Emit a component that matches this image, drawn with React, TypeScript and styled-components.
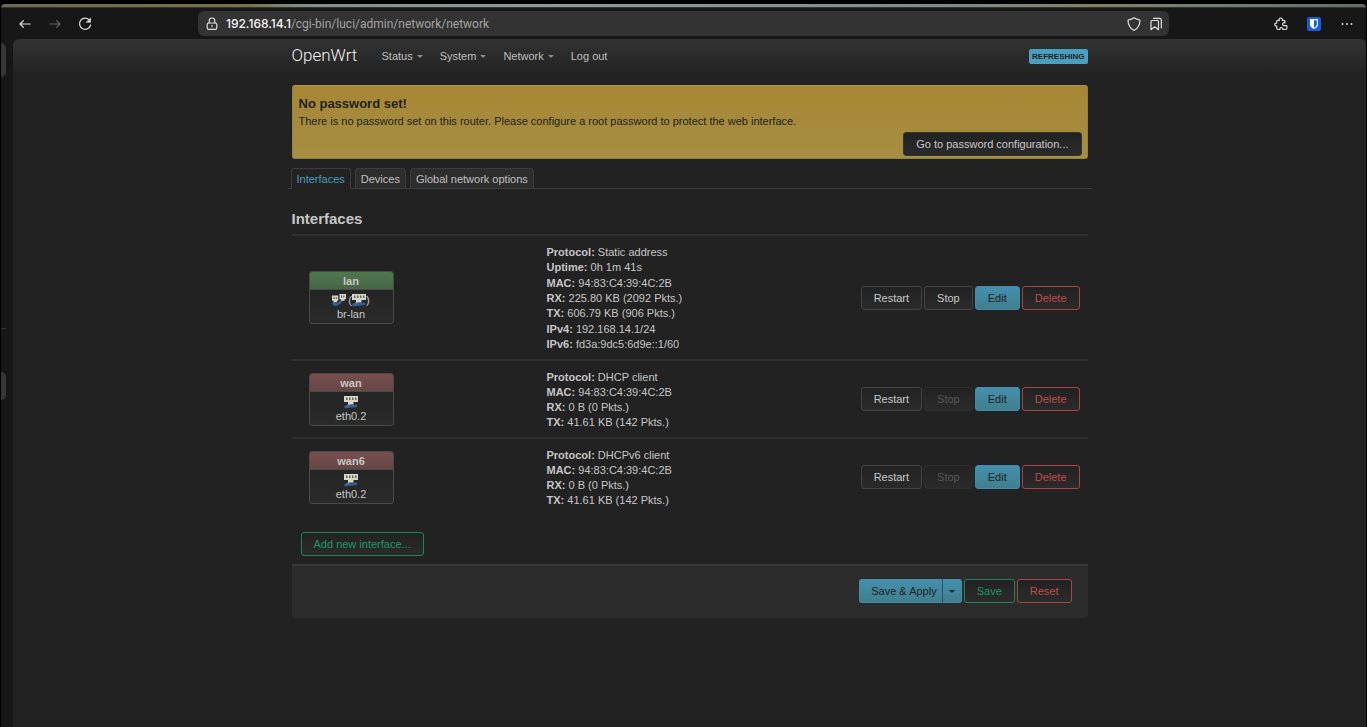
import React from "react";
import styled, { createGlobalStyle, css } from "styled-components";

const GlobalStyle = createGlobalStyle`
  * { box-sizing: border-box; }
  body {
    margin: 0;
    background: #000;
    color: #c6c6c6;
    font: 11px/15px "Helvetica Neue", "Liberation Sans", Arial, sans-serif;
  }
  button, input { font: inherit; }
  a { color: inherit; text-decoration: none; }
`;

/* ---------- browser window ---------- */

const Window = styled.div`
  display: flex;
  flex-direction: column;
  min-height: 100vh;
  padding: 4px 1px 0;
`;

const TopStrip = styled.div`
  height: 4px;
  border-radius: 4px 4px 0 0;
  border-bottom: 1px solid #333;
  background: linear-gradient(90deg, #6c6a50 0%, #7a7242 18%, #7f9088 22%, #8d9a9c 40%, #7c8c8c 70%, #82805c 80%, #6c7f74 90%, #5d6f63 100%);
`;

const Toolbar = styled.div`
  display: grid;
  grid-template-columns: 1fr 71% 1fr;
  align-items: center;
  height: 31px;
  background: #171717;
`;

const ToolGroup = styled.div<{ $end?: boolean }>`
  display: flex;
  align-items: center;
  gap: ${(p) => (p.$end ? 18 : 14)}px;
  padding: 0 11px 0 16px;
  justify-content: ${(p) => (p.$end ? "flex-end" : "flex-start")};
`;

const IconButton = styled.button<{ $dim?: boolean }>`
  display: flex;
  padding: 0;
  border: 0;
  background: none;
  color: ${(p) => (p.$dim ? "#646464" : "#dedede")};
`;

const AddressBar = styled.div`
  display: flex;
  align-items: center;
  gap: 6px;
  height: 25px;
  margin: 0 -1px;
  padding: 0 5px 0 6px;
  border-radius: 6px;
  background: #333;
`;

const Address = styled.label`
  display: flex;
  flex: 1;
  min-width: 0;
  align-items: center;
  font: 12px/16px Inter, sans-serif;
`;

const Host = styled.span`
  color: #f4f4f4;
  font-weight: 500;
`;

const PathInput = styled.input`
  flex: 1;
  min-width: 0;
  padding: 0;
  border: 0;
  outline: 0;
  background: none;
  color: #a2a2a2;
  font-family: Roboto, sans-serif;
`;

const Body = styled.div`
  display: flex;
  flex: 1;
  background: #171717;
`;

const SideRail = styled.div`
  position: relative;
  width: 12px;
`;

const RailPill = styled.span<{ $top: number; $height: number }>`
  position: absolute;
  left: 0;
  top: ${(p) => p.$top}px;
  width: 5px;
  height: ${(p) => p.$height}px;
  border-radius: 0 5px 5px 0;
  background: #363636;
`;

const Viewport = styled.div`
  flex: 1;
  min-width: 0;
  border-radius: 6px 6px 0 0;
  background: linear-gradient(#333 0, #222 35px) #222;
`;

/* ---------- router page ---------- */

const Container = styled.div`
  max-width: 796px;
  margin: 0 auto;
`;

const Header = styled.header`
  display: flex;
  align-items: center;
  height: 34px;
`;

const Brand = styled.a`
  width: 90px;
  padding-bottom: 3px;
  color: #f2f2f2;
  font: 300 17px/24px Roboto, sans-serif;
`;

const Nav = styled.nav`
  display: flex;
  flex: 1;
  gap: 17px;
  color: #bfbfbf;
`;

const NavLink = styled.a`
  display: flex;
  align-items: center;
  gap: 4px;
`;

const Caret = styled.span<{ $color?: string }>`
  border: 3px solid transparent;
  border-top-color: ${(p) => p.$color || "#8c8c8c"};
  border-bottom: 0;
`;

const Badge = styled.span`
  padding: 0 3px;
  border-radius: 2px;
  background: #4a9fbe;
  color: #222;
  font-size: 8px;
  font-weight: 700;
`;

const Alert = styled.section`
  display: flex;
  flex-direction: column;
  height: 74px;
  margin: 12px 0 9px;
  padding: 10px 5px 2px 6px;
  border: 1px solid #96803a;
  border-top-color: #b3924a;
  border-radius: 3px;
  background: linear-gradient(#a78634, #a58f43);
  color: #222;

  h4 { margin: 0 0 2px; font-size: 13px; line-height: 16px; }
  p { margin: 0; }
`;

const Tabs = styled.nav`
  display: flex;
  gap: 4px;
  margin: 0 -4px;
  padding: 0 3px;
  border-bottom: 1px solid #3c3c3c;
`;

const Tab = styled.a<{ $active?: boolean }>`
  height: 21px;
  margin-bottom: -1px;
  padding: 3px 5px;
  border: 1px solid #3c3c3c;
  border-bottom-color: ${(p) => (p.$active ? "#222" : "#3c3c3c")};
  border-radius: 3px 3px 0 0;
  background: ${(p) => (p.$active ? "#222" : "#2d2d2d")};
  color: ${(p) => (p.$active ? "#4a9fbe" : "#c0c0c0")};
`;

const Title = styled.h3`
  margin: 19px 0 0;
  padding-bottom: 4px;
  border-bottom: 2px solid #2f2f2f;
  font-size: 15px;
  line-height: 22px;
`;

const Table = styled.table`
  display: block;
  tbody { display: block; }
`;

const Row = styled.tr`
  display: grid;
  grid-template-columns: 255px 1fr auto;
  min-height: 78px;
  border-bottom: 2px solid #2f2f2f;
  &:first-child { min-height: 125px; }
  &:last-child { border-bottom-color: transparent; }
`;

const NameCell = styled.td`
  display: flex;
  align-items: center;
  padding: 0 17px;
`;

const IfaceBox = styled.div`
  width: 85px;
  height: 53px;
  overflow: hidden;
  border: 1px solid #4a4a4a;
  border-radius: 3px;
  background: linear-gradient(#222, #2a2a2a);
  text-align: center;
`;

const IfaceHead = styled.div<{ $up?: boolean }>`
  height: 18px;
  border-bottom: 1px solid #4a4a4a;
  background: ${(p) => (p.$up ? "linear-gradient(#4f784f, #466646)" : "linear-gradient(#784f4f, #664646)")};
  font-weight: 700;
  line-height: 18px;
`;

const IfaceIcons = styled.div`
  display: flex;
  justify-content: center;
  gap: 2px;
  height: 17px;
  padding-top: 4px;
  line-height: 12px;

  span { display: flex; }
`;

const DetailsCell = styled.td`
  display: flex;
  flex-direction: column;
  justify-content: space-between;
  padding: 9px 0 7px;
`;

const ActionsCell = styled.td`
  display: flex;
  align-items: center;
  gap: 2px;
  padding: 0 8px;
`;

type Tone = "neutral" | "primary" | "danger" | "success";
const tones = {
  neutral: css`
    border-color: #444;
    color: #c8c8c8;
  `,
  primary: css`
    border-color: #438ca8;
    background: linear-gradient(#4490ae, #407f8e);
    color: #222;
  `,
  danger: css`
    border-color: #a84644;
    color: #c04c4a;
  `,
  success: css`
    border-color: #1c8558;
    color: #1c9b64;
  `,
};

const Button = styled.button<{ $tone?: Tone }>`
  height: 24px;
  padding: 0 12px;
  border: 1px solid;
  border-radius: 3px;
  background: linear-gradient(#222, #2b2b2b);
  line-height: 20px;
  white-space: nowrap;
  ${(p) => tones[p.$tone || "neutral"]}
  &:disabled { border-color: #2d2d2d; color: #585858; }
`;

const AlertButton = styled(Button)`
  align-self: flex-end;
  margin-top: auto;
  border-color: #333;
`;

const AddRow = styled.div`
  display: flex;
  padding: 15px 9px 8px;
`;

const Footer = styled.footer`
  display: flex;
  justify-content: flex-end;
  gap: 2px;
  padding: 13px 16px 15px;
  border-top: 2px solid #383838;
  border-radius: 0 0 3px 3px;
  background: #2c2c2c;
`;

const SplitButton = styled.div`
  display: flex;

  ${Button}:first-child {
    padding-right: 5px;
    padding-left: 11px;
    border-right-color: #2c5563;
    border-radius: 3px 0 0 3px;
  }
  ${Button}:last-child {
    padding: 0 6px;
    border-left: 0;
    border-radius: 0 3px 3px 0;
  }
  ${Caret} { display: block; }
`;

/* ---------- icons ---------- */

const Icon = ({ children, size = 16 }: { children: React.ReactNode; size?: number }) => (
  <svg width={size} height={size} viewBox="0 0 16 16" fill="none" stroke="currentColor" strokeWidth="1.2" strokeLinecap="round" strokeLinejoin="round" aria-hidden="true">
    {children}
  </svg>
);

const BackIcon = () => <Icon><path d="M13.2 8H3M6.4 4.6 3 8l3.4 3.4" /></Icon>;
const ForwardIcon = () => <Icon><path d="M2.8 8H13M9.6 4.6 13 8l-3.4 3.4" /></Icon>;
const ReloadIcon = () => (
  <Icon>
    <path d="M12.6 4.3A5.6 5.6 0 1 0 13.6 9" />
    <path d="M13.6 2.2v4.1H9.5z" fill="currentColor" strokeWidth="0.6" />
  </Icon>
);
const LockIcon = () => (
  <Icon>
    <rect x="3.2" y="7" width="9.6" height="6.4" rx="1.6" />
    <path d="M5.200 7V4.800a2.800 2.800 0 0 1 5.600 0V7M8 9.600v1.200" />
  </Icon>
);
const ShieldIcon = () => (
  <Icon>
    <path d="M8 1.800c1.600 1.100 3.300 1.800 5.300 2 .5.1.8.4.7.9-.2 4-1.800 7.100-5.300 9.300q-.7.4-1.400 0C3.800 11.800 2.200 8.700 2 4.700c0-.5.200-.8.700-.9 2-.2 3.700-.9 5.300-2z" />
  </Icon>
);
const BookmarksIcon = () => (
  <Icon>
    <path d="M3 5.400q0-.9.900-.9h5.700q.9 0 .9.900v8.300L6.750 10.800 3 13.700z" />
    <path d="M5.500 2.300h6.100q1.700 0 1.700 1.700v7.800" />
  </Icon>
);
const PuzzleIcon = () => (
  <Icon>
    <path d="M3.700 5.600q0-1.300 1.300-1.300h1.400C5.900 2.900 6.600 2 7.800 2s1.900.9 1.400 2.300h1.500q1.300 0 1.300 1.300v1.200c-1.500-.4-2.400.3-2.400 1.400s.9 1.800 2.400 1.400h1.300q.6 0 .6.600v1.900q0 1.400-1.400 1.400H9.900c.2-1.300-.5-2-1.500-2s-1.700.7-1.500 2H5.200q-1.500 0-1.500-1.400V10C2.500 10.300 1.800 9.500 1.800 8.500s.7-1.700 1.900-1.400z" />
  </Icon>
);
const VaultIcon = () => (
  <svg width="14" height="14" viewBox="0 0 14 14" aria-hidden="true">
    <rect width="14" height="14" rx="2" fill="#175ddc" />
    <path d="M3 2h8v5.200c0 2.400-2 3.900-4 4.900-2-1-4-2.500-4-4.900z" fill="#fff" />
    <path d="M7 3.200h2.800v4c0 1.600-1.300 2.700-2.800 3.600z" fill="#175ddc" />
  </svg>
);
const MoreIcon = () => (
  <Icon>
    <g fill="currentColor" stroke="none">
      <circle cx="3.500" cy="8" r="1" />
      <circle cx="8" cy="8" r="1" />
      <circle cx="12.500" cy="8" r="1" />
    </g>
  </Icon>
);

const PortIcon = () => (
  <svg width="14" height="13" viewBox="0 0 14 13" aria-hidden="true">
    <path d="M.5 11.300q3-.8 5.500-.8t7-.7" stroke="#33619a" strokeWidth="2.600" fill="none" />
    <path d="M2.500 10.500 6 8" stroke="#4a72a2" strokeWidth="2" />
    <path d="M0 0h14v6H9.500v2.500H4V6H0z" fill="#d6d6cc" />
    <path d="M2 1.500h1.500V4H2zM5 1.500h1.500V4H5zM8 1.500h1.500V4H8zM11 1.500h1.500V4H11z" fill="#6a6a48" />
  </svg>
);
const BridgeIcon = () => (
  <svg width="14" height="13" viewBox="0 0 14 13" aria-hidden="true">
    <path d="M1.500 8.500Q2 11 4.500 10.500T9.500 7" stroke="#33619a" strokeWidth="2.600" fill="none" />
    <path d="M0 1.500h6.200v5.200H5v1.600H1.500V6.700H0zM7.500 0H14v5.200h-1.500v1.600H9V5.200H7.500z" fill="#d6d6cc" />
    <path d="M1.500 3h1v2h-1zM3.700 3h1v2h-1zM9 1.500h1v2H9zM11.300 1.500h1v2h-1z" fill="#4a4a3c" />
  </svg>
);

/* ---------- data ---------- */

type Iface = { name: string; device: string; up?: boolean; bridge?: boolean; details: [string, string][] };

const interfaces: Iface[] = [
  {
    name: "lan", device: "br-lan", up: true, bridge: true,
    details: [
      ["Protocol", "Static address"],
      ["Uptime", "0h 1m 41s"],
      ["MAC", "94:83:C4:39:4C:2B"],
      ["RX", "225.80 KB (2092 Pkts.)"],
      ["TX", "606.79 KB (906 Pkts.)"],
      ["IPv4", "192.168.14.1/24"],
      ["IPv6", "fd3a:9dc5:6d9e::1/60"],
    ],
  },
  {
    name: "wan", device: "eth0.2",
    details: [
      ["Protocol", "DHCP client"],
      ["MAC", "94:83:C4:39:4C:2B"],
      ["RX", "0 B (0 Pkts.)"],
      ["TX", "41.61 KB (142 Pkts.)"],
    ],
  },
  {
    name: "wan6", device: "eth0.2",
    details: [
      ["Protocol", "DHCPv6 client"],
      ["MAC", "94:83:C4:39:4C:2B"],
      ["RX", "0 B (0 Pkts.)"],
      ["TX", "41.61 KB (142 Pkts.)"],
    ],
  },
];

const InterfaceRow = ({ iface }: { iface: Iface }) => (
  <Row>
    <NameCell>
      <IfaceBox>
        <IfaceHead $up={iface.up}>{iface.name}</IfaceHead>
        <IfaceIcons>
          {iface.bridge ? (
            <>
              <BridgeIcon />
              <span>(<PortIcon />)</span>
            </>
          ) : (
            <PortIcon />
          )}
        </IfaceIcons>
        <div>{iface.device}</div>
      </IfaceBox>
    </NameCell>
    <DetailsCell>
      {iface.details.map(([label, value]) => (
        <div key={label}><strong>{label}:</strong> {value}</div>
      ))}
    </DetailsCell>
    <ActionsCell>
      <Button>Restart</Button>
      <Button disabled={!iface.up}>Stop</Button>
      <Button $tone="primary">Edit</Button>
      <Button $tone="danger">Delete</Button>
    </ActionsCell>
  </Row>
);

export default function App() {
  return (
    <Window>
      <GlobalStyle />
      <TopStrip />
      <Toolbar>
        <ToolGroup>
          <IconButton aria-label="Back"><BackIcon /></IconButton>
          <IconButton aria-label="Forward" $dim><ForwardIcon /></IconButton>
          <IconButton aria-label="Reload"><ReloadIcon /></IconButton>
        </ToolGroup>
        <AddressBar>
          <IconButton aria-label="Connection"><LockIcon /></IconButton>
          <Address>
            <Host>192.168.14.1</Host>
            <PathInput defaultValue="/cgi-bin/luci/admin/network/network" />
          </Address>
          <IconButton aria-label="Tracking protection"><ShieldIcon /></IconButton>
          <IconButton aria-label="Bookmarks"><BookmarksIcon /></IconButton>
        </AddressBar>
        <ToolGroup $end>
          <IconButton aria-label="Extensions"><PuzzleIcon /></IconButton>
          <IconButton aria-label="Password vault"><VaultIcon /></IconButton>
          <IconButton aria-label="More"><MoreIcon /></IconButton>
        </ToolGroup>
      </Toolbar>
      <Body>
        <SideRail>
          <RailPill $top={4} $height={34} />
          <RailPill $top={289} $height={1} />
          <RailPill $top={333} $height={28} />
        </SideRail>
        <Viewport>
          <Container>
            <Header>
              <Brand href="#">OpenWrt</Brand>
              <Nav>
                <NavLink href="#">Status<Caret /></NavLink>
                <NavLink href="#">System<Caret /></NavLink>
                <NavLink href="#">Network<Caret /></NavLink>
                <NavLink href="#">Log out</NavLink>
              </Nav>
              <Badge>REFRESHING</Badge>
            </Header>
            <main>
              <Alert>
                <h4>No password set!</h4>
                <p>There is no password set on this router. Please configure a root password to protect the web interface.</p>
                <AlertButton>Go to password configuration...</AlertButton>
              </Alert>
              <Tabs>
                <Tab href="#" $active>Interfaces</Tab>
                <Tab href="#">Devices</Tab>
                <Tab href="#">Global network options</Tab>
              </Tabs>
              <Title>Interfaces</Title>
              <Table>
                <tbody>
                  {interfaces.map((iface) => <InterfaceRow key={iface.name} iface={iface} />)}
                </tbody>
              </Table>
              <AddRow><Button $tone="success">Add new interface...</Button></AddRow>
              <Footer>
                <SplitButton>
                  <Button $tone="primary">Save &amp; Apply</Button>
                  <Button $tone="primary" aria-label="Apply options"><Caret $color="#222" /></Button>
                </SplitButton>
                <Button $tone="success">Save</Button>
                <Button $tone="danger">Reset</Button>
              </Footer>
            </main>
          </Container>
        </Viewport>
      </Body>
    </Window>
  );
}
